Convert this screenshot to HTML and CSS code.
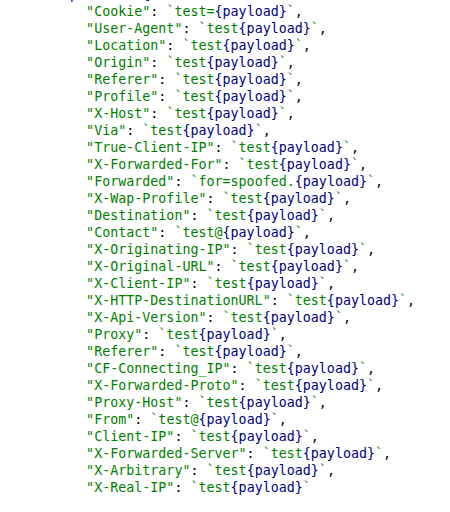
FILE: index.html
```html
<!DOCTYPE html>
<html>
<head>
<meta charset="utf-8">
<link rel="stylesheet" href="styles.css">
</head>
<body>
<div class="code">
<div class="line"><span class="v">expected = {</span></div>
<div class="line">    <span class="s">"Cookie"</span>: <span class="s">`test=</span><span class="v">{payload}</span><span class="s">`</span>,</div>
<div class="line">    <span class="s">"User-Agent"</span>: <span class="s">`test</span><span class="v">{payload}</span><span class="s">`</span>,</div>
<div class="line">    <span class="s">"Location"</span>: <span class="s">`test</span><span class="v">{payload}</span><span class="s">`</span>,</div>
<div class="line">    <span class="s">"Origin"</span>: <span class="s">`test</span><span class="v">{payload}</span><span class="s">`</span>,</div>
<div class="line">    <span class="s">"Referer"</span>: <span class="s">`test</span><span class="v">{payload}</span><span class="s">`</span>,</div>
<div class="line">    <span class="s">"Profile"</span>: <span class="s">`test</span><span class="v">{payload}</span><span class="s">`</span>,</div>
<div class="line">    <span class="s">"X-Host"</span>: <span class="s">`test</span><span class="v">{payload}</span><span class="s">`</span>,</div>
<div class="line">    <span class="s">"Via"</span>: <span class="s">`test</span><span class="v">{payload}</span><span class="s">`</span>,</div>
<div class="line">    <span class="s">"True-Client-IP"</span>: <span class="s">`test</span><span class="v">{payload}</span><span class="s">`</span>,</div>
<div class="line">    <span class="s">"X-Forwarded-For"</span>: <span class="s">`test</span><span class="v">{payload}</span><span class="s">`</span>,</div>
<div class="line">    <span class="s">"Forwarded"</span>: <span class="s">`for=spoofed.</span><span class="v">{payload}</span><span class="s">`</span>,</div>
<div class="line">    <span class="s">"X-Wap-Profile"</span>: <span class="s">`test</span><span class="v">{payload}</span><span class="s">`</span>,</div>
<div class="line">    <span class="s">"Destination"</span>: <span class="s">`test</span><span class="v">{payload}</span><span class="s">`</span>,</div>
<div class="line">    <span class="s">"Contact"</span>: <span class="s">`test@</span><span class="v">{payload}</span><span class="s">`</span>,</div>
<div class="line">    <span class="s">"X-Originating-IP"</span>: <span class="s">`test</span><span class="v">{payload}</span><span class="s">`</span>,</div>
<div class="line">    <span class="s">"X-Original-URL"</span>: <span class="s">`test</span><span class="v">{payload}</span><span class="s">`</span>,</div>
<div class="line">    <span class="s">"X-Client-IP"</span>: <span class="s">`test</span><span class="v">{payload}</span><span class="s">`</span>,</div>
<div class="line">    <span class="s">"X-HTTP-DestinationURL"</span>: <span class="s">`test</span><span class="v">{payload}</span><span class="s">`</span>,</div>
<div class="line">    <span class="s">"X-Api-Version"</span>: <span class="s">`test</span><span class="v">{payload}</span><span class="s">`</span>,</div>
<div class="line">    <span class="s">"Proxy"</span>: <span class="s">`test</span><span class="v">{payload}</span><span class="s">`</span>,</div>
<div class="line">    <span class="s">"Referer"</span>: <span class="s">`test</span><span class="v">{payload}</span><span class="s">`</span>,</div>
<div class="line">    <span class="s">"CF-Connecting_IP"</span>: <span class="s">`test</span><span class="v">{payload}</span><span class="s">`</span>,</div>
<div class="line">    <span class="s">"X-Forwarded-Proto"</span>: <span class="s">`test</span><span class="v">{payload}</span><span class="s">`</span>,</div>
<div class="line">    <span class="s">"Proxy-Host"</span>: <span class="s">`test</span><span class="v">{payload}</span><span class="s">`</span>,</div>
<div class="line">    <span class="s">"From"</span>: <span class="s">`test@</span><span class="v">{payload}</span><span class="s">`</span>,</div>
<div class="line">    <span class="s">"Client-IP"</span>: <span class="s">`test</span><span class="v">{payload}</span><span class="s">`</span>,</div>
<div class="line">    <span class="s">"X-Forwarded-Server"</span>: <span class="s">`test</span><span class="v">{payload}</span><span class="s">`</span>,</div>
<div class="line">    <span class="s">"X-Arbitrary"</span>: <span class="s">`test</span><span class="v">{payload}</span><span class="s">`</span>,</div>
<div class="line">    <span class="s">"X-Real-IP"</span>: <span class="s">`test</span><span class="v">{payload}</span><span class="s">`</span></div>
</div>
</body>
</html>
```
FILE: styles.css
```css
html, body {
  margin: 0;
  padding: 0;
  background: #ffffff;
  overflow: hidden;
}
.code {
  margin: -14.3px 0 0 0;
  padding: 0 0 0 54px;
  font-family: "DejaVu Sans Mono", monospace;
  font-size: 13.333px;
  color: #000000;
}
.line {
  height: 17px;
  line-height: 17px;
  white-space: pre;
}
.s {
  color: #008000;
}
.v {
  color: #000080;
}
```
